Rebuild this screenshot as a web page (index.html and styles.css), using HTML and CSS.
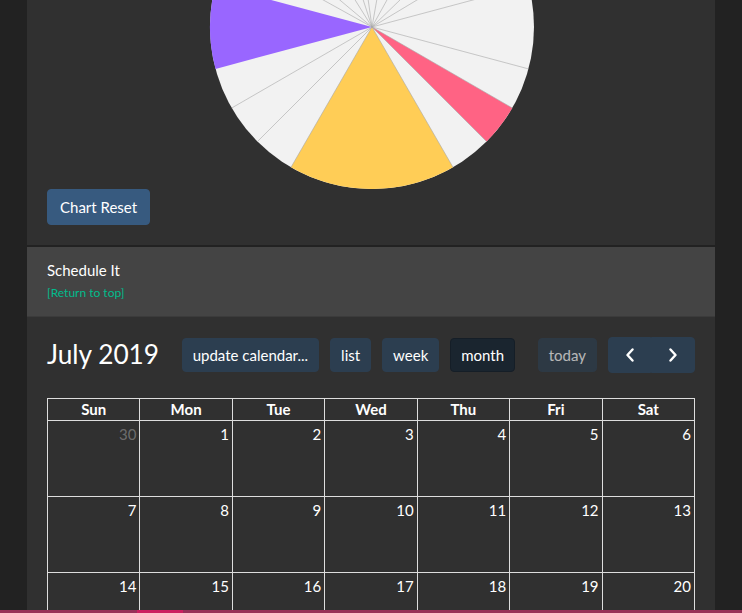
FILE: index.html
```html
<!DOCTYPE html>
<html lang="en">
<head>
<meta charset="utf-8">
<title>Schedule It</title>
<link rel="stylesheet" href="styles.css">
</head>
<body>
<div class="page">
  <div class="card">
    <div class="chart-body">
      <svg class="pie" viewBox="0 0 648 189" xmlns="http://www.w3.org/2000/svg">
        <circle cx="325" cy="27" r="162" fill="#f2f2f2"/>
        <path d="M325 27 L465.3 108 A162 162 0 0 1 439.6 141.6 Z" fill="#ff6384"/>
        <path d="M325 27 L406 167.3 A162 162 0 0 1 244 167.3 Z" fill="#ffcd56"/>
        <path d="M325 27 L168.5 68.9 A162 162 0 0 1 168.5 -14.9 Z" fill="#9966ff"/>
        <g stroke="#a8a8a8" stroke-width="0.6" fill="none">
          <line x1="325" y1="27" x2="481.5" y2="68.9"/>
          <line x1="325" y1="27" x2="465.3" y2="108"/>
          <line x1="325" y1="27" x2="439.6" y2="141.6"/>
          <line x1="325" y1="27" x2="406" y2="167.3"/>
          <line x1="325" y1="27" x2="244" y2="167.3"/>
          <line x1="325" y1="27" x2="210.4" y2="141.6"/>
          <line x1="325" y1="27" x2="184.7" y2="108"/>
          <line x1="325" y1="27" x2="183.3" y2="-51.5"/>
          <line x1="325" y1="27" x2="200.9" y2="-77.1"/>
          <line x1="325" y1="27" x2="239.2" y2="-110.4"/>
          <line x1="325" y1="27" x2="274.9" y2="-127"/>
          <line x1="325" y1="27" x2="302.5" y2="-133.4"/>
          <line x1="325" y1="27" x2="353.1" y2="-132.5"/>
          <line x1="325" y1="27" x2="403.5" y2="-114.7"/>
          <line x1="325" y1="27" x2="441.5" y2="-85.5"/>
          <line x1="325" y1="27" x2="463.9" y2="-56.4"/>
          <line x1="325" y1="27" x2="481.5" y2="-14.9"/>
        </g>
      </svg>
      <button class="btn-reset" type="button">Chart Reset</button>
    </div>
  </div>

  <div class="card">
    <div class="card-header">
      <div class="header-title">Schedule It</div>
      <a class="top-link" href="#">[Return to top]</a>
    </div>
    <div class="card-body">
      <div class="toolbar">
        <h2 class="cal-title">July 2019</h2>
        <div class="chunk">
          <button class="fc-btn" type="button">update calendar...</button>
          <button class="fc-btn" type="button">list</button>
          <button class="fc-btn" type="button">week</button>
          <button class="fc-btn active" type="button">month</button>
        </div>
        <div class="chunk">
          <button class="fc-btn disabled" type="button">today</button>
          <div class="nav-group">
            <button class="fc-btn nav prev" type="button" aria-label="prev">
              <svg width="10" height="14" viewBox="0 0 10 14"><path d="M7.5 1.5 L2.5 7 L7.5 12.5" fill="none" stroke="#fff" stroke-width="2.4" stroke-linecap="round" stroke-linejoin="round"/></svg>
            </button>
            <button class="fc-btn nav next" type="button" aria-label="next">
              <svg width="10" height="14" viewBox="0 0 10 14"><path d="M2.5 1.5 L7.5 7 L2.5 12.5" fill="none" stroke="#fff" stroke-width="2.4" stroke-linecap="round" stroke-linejoin="round"/></svg>
            </button>
          </div>
        </div>
      </div>

      <table class="cal">
        <thead>
          <tr><th>Sun</th><th>Mon</th><th>Tue</th><th>Wed</th><th>Thu</th><th>Fri</th><th>Sat</th></tr>
        </thead>
        <tbody>
          <tr>
            <td><div class="num other">30</div></td>
            <td><div class="num">1</div></td>
            <td><div class="num">2</div></td>
            <td><div class="num">3</div></td>
            <td><div class="num">4</div></td>
            <td><div class="num">5</div></td>
            <td><div class="num">6</div></td>
          </tr>
          <tr>
            <td><div class="num">7</div></td>
            <td><div class="num">8</div></td>
            <td><div class="num">9</div></td>
            <td><div class="num">10</div></td>
            <td><div class="num">11</div></td>
            <td><div class="num">12</div></td>
            <td><div class="num">13</div></td>
          </tr>
          <tr>
            <td><div class="num">14</div></td>
            <td><div class="num">15</div></td>
            <td><div class="num">16</div></td>
            <td><div class="num">17</div></td>
            <td><div class="num">18</div></td>
            <td><div class="num">19</div></td>
            <td><div class="num">20</div></td>
          </tr>
          <tr>
            <td><div class="num">21</div></td>
            <td><div class="num">22</div></td>
            <td><div class="num">23</div></td>
            <td><div class="num">24</div></td>
            <td><div class="num">25</div></td>
            <td><div class="num">26</div></td>
            <td><div class="num">27</div></td>
          </tr>
          <tr>
            <td><div class="num">28</div></td>
            <td><div class="num">29</div></td>
            <td><div class="num">30</div></td>
            <td><div class="num">31</div></td>
            <td><div class="num other">1</div></td>
            <td><div class="num other">2</div></td>
            <td><div class="num other">3</div></td>
          </tr>
        </tbody>
      </table>
    </div>
  </div>
</div>
<div class="loadbar"><span class="loadbar-glow"></span></div>
</body>
</html>
```

FILE: styles.css
```css
html, body {
  margin: 0;
  padding: 0;
}

body {
  background: #222;
  color: #fff;
  font-family: Lato, "Liberation Sans", sans-serif;
  font-size: 15px;
  line-height: 1.5;
}

.page {
  padding: 0 27px;
}

.card {
  background: #303030;
}

.card + .card {
  margin-top: 2px;
}

.chart-body {
  padding: 0 20px 20px;
}

.pie {
  display: block;
  width: 648px;
  height: 189px;
}

.btn-reset {
  font: inherit;
  line-height: 22px;
  color: #fff;
  background: #375a7f;
  border: 1px solid #375a7f;
  border-radius: 4px;
  padding: 6px 12px;
}

.card-header {
  background: #444;
  padding: 12px 20px 14px;
  border-bottom: 1px solid rgba(0, 0, 0, 0.125);
}

.header-title {
  font-size: 15px;
}

.top-link {
  display: block;
  margin-top: 2px;
  font-size: 12px;
  line-height: 18px;
  color: #00bc8c;
  text-decoration: none;
}

.card-body {
  padding: 20px;
}

.toolbar {
  display: flex;
  justify-content: space-between;
  align-items: center;
  margin-bottom: 25px;
}

.cal-title {
  margin: 0;
  font-size: 26.25px;
  font-weight: 400;
  line-height: 1.2;
}

.chunk {
  display: flex;
  align-items: center;
  gap: 11px;
}

.fc-btn {
  font: inherit;
  line-height: 22px;
  color: #fff;
  background: #2c3e50;
  border: 1px solid #2c3e50;
  border-radius: 4px;
  padding: 5px 10px;
}

.fc-btn.active {
  background: #1a252f;
  border-color: #151e27;
}

.fc-btn.disabled {
  opacity: 0.65;
}

.nav-group {
  display: flex;
}

.fc-btn.nav {
  display: flex;
  align-items: center;
  justify-content: center;
  width: 43.5px;
  height: 36px;
  padding: 0;
}

.fc-btn.prev {
  border-radius: 4px 0 0 4px;
}

.fc-btn.next {
  border-radius: 0 4px 4px 0;
}

.cal {
  width: 100%;
  border-collapse: collapse;
  table-layout: fixed;
}

.cal th,
.cal td {
  border: 1px solid #ddd;
  padding: 0;
}

.cal th {
  font-weight: 700;
  line-height: 21px;
  text-align: center;
}

.cal td {
  height: 75px;
  vertical-align: top;
}

.num {
  text-align: right;
  padding: 2px 3px;
}

.num.other {
  color: rgba(255, 255, 255, 0.3);
}

.loadbar {
  position: fixed;
  left: 0;
  right: 0;
  bottom: 0;
  height: 3px;
  background: #983058;
}

.loadbar-glow {
  position: absolute;
  left: 137px;
  width: 46px;
  top: 0;
  bottom: 0;
  background: #cc1f60;
}
```
